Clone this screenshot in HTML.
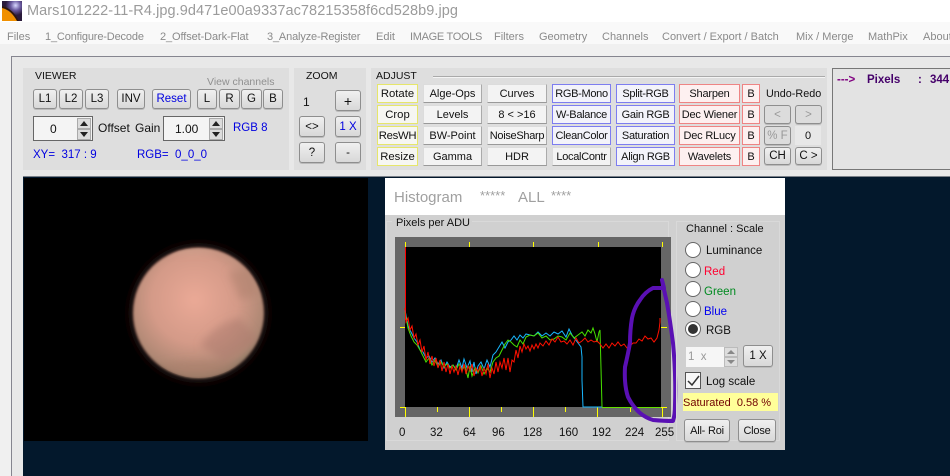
<!DOCTYPE html>
<html><head><meta charset="utf-8"><style>
*{box-sizing:border-box}
html,body{margin:0;padding:0}
body{width:950px;height:476px;overflow:hidden;position:relative;background:#f0f0f0;font-family:"Liberation Sans",Arial,sans-serif;font-size:12px;color:#111}
.a{position:absolute}
.t{position:absolute;white-space:nowrap;line-height:14px}
.h{font-size:10.5px}
.m{position:absolute;top:30px;color:#8a8a8a;font-size:11px;line-height:14px;white-space:nowrap}
.b{position:absolute;display:flex;align-items:center;justify-content:center;white-space:nowrap;border:1px solid #8e8e8e;border-radius:3px;background:linear-gradient(#f0f0f0,#d8d8d8);font-size:11.5px;color:#111;box-shadow:0 1px 0 #bbb}
.f{position:absolute;display:flex;align-items:center;justify-content:center;white-space:nowrap;height:19px;background:#f2f2f2;font-size:11px;color:#111}
.y{border:1px solid #e6e66a;background:#f6f6f2;font-size:11.3px}
.g{border:1px solid;border-color:#dcdcdc #aaa #999 #dcdcdc;background:#f3f3f3}
.u{border:1px solid #7d7df0;background:#f3f3fa;letter-spacing:-.3px}
.r{border:1px solid #ee8484;background:#fdf0f0;letter-spacing:-.2px}
.s{position:absolute;border:1px solid #666;background:#f4f4f4}
.ar{position:absolute;background:#dcdcdc;border:1px solid #aaa;width:14px;height:11px}
.ar:after{content:"";position:absolute;left:2px;border-left:4px solid transparent;border-right:4px solid transparent}
.up:after{top:2px;border-bottom:5px solid #222}
.dn:after{top:2px;border-top:5px solid #222}
.rd{position:absolute;left:685px;width:16px;height:16px;border-radius:50%;border:1px solid #666;background:#fff}
</style></head><body>

<div class="a" style="left:0;top:0;width:950px;height:22px;background:#fff"></div>
<div class="a" style="left:0;top:22px;width:950px;height:22px;background:#f9f9f9"></div>
<svg class="a" style="left:2px;top:1px" width="20" height="20" viewBox="0 0 20 20"><defs><radialGradient id="ic" cx="0.68" cy="0.22" r="0.5"><stop offset="0" stop-color="#d8d8ff"/><stop offset="0.5" stop-color="#6a5aa0"/><stop offset="1" stop-color="#2a1a3a"/></radialGradient></defs><rect width="20" height="20" fill="url(#ic)"/><path d="M0 7Q9 9 15 20H0Z" fill="#f09000"/><path d="M0 6Q10 8 16 20" stroke="#301808" stroke-width="1.5" fill="none"/></svg>
<div class="t" style="left:27px;top:3px;font-size:14.5px;line-height:17px;color:#9b9b9b;letter-spacing:.07px">Mars101222-11-R4.jpg.9d471e00a9337ac78215358f6cd528b9.jpg</div>
<div class="m" style="left:7px">Files</div>
<div class="m" style="left:45px;letter-spacing:-.15px">1_Configure-Decode</div>
<div class="m" style="left:160px;letter-spacing:-.1px">2_Offset-Dark-Flat</div>
<div class="m" style="left:267px;letter-spacing:-.15px">3_Analyze-Register</div>
<div class="m" style="left:376px">Edit</div>
<div class="m" style="left:410px;letter-spacing:-.3px">IMAGE TOOLS</div>
<div class="m" style="left:494px">Filters</div>
<div class="m" style="left:539px">Geometry</div>
<div class="m" style="left:602px">Channels</div>
<div class="m" style="left:662px">Convert / Export / Batch</div>
<div class="m" style="left:796px">Mix / Merge</div>
<div class="m" style="left:868px">MathPix</div>
<div class="m" style="left:923px">About</div>

<div class="a" style="left:11px;top:56px;width:939px;height:420px;background:#e8e8e8;border-left:1px solid #85858f;border-top:1px solid #85858f"></div>
<div class="a" style="left:23px;top:68px;width:266px;height:102px;background:#dedede"></div>
<div class="a" style="left:294px;top:68px;width:72px;height:102px;background:#dedede"></div>
<div class="a" style="left:371px;top:68px;width:456px;height:102px;background:#dedede"></div>
<div class="a" style="left:832px;top:68px;width:118px;height:102px;background:#e3e3e3;border:1px solid #777;border-right:0"></div>
<div class="t" style="left:837px;top:73px;font-weight:bold;color:#800080;font-size:11.5px">---&gt;</div>
<div class="t" style="left:867px;top:73px;font-weight:bold;color:#45006a;font-size:11.5px">Pixels</div>
<div class="t" style="left:918px;top:73px;font-weight:bold;color:#45006a;font-size:11.5px">:</div>
<div class="t" style="left:930px;top:73px;font-weight:bold;color:#45006a;font-size:11.5px">344</div>

<div class="t h" style="left:35px;top:69px">VIEWER</div>
<div class="t h" style="left:207px;top:75px;color:#909090">View channels</div>
<div class="b" style="left:33px;top:89px;width:24px;height:20px">L1</div>
<div class="b" style="left:59px;top:89px;width:24px;height:20px">L2</div>
<div class="b" style="left:85px;top:89px;width:24px;height:20px">L3</div>
<div class="b" style="left:117px;top:89px;width:28px;height:20px">INV</div>
<div class="b" style="left:152px;top:89px;width:39px;height:20px;color:#0000e0">Reset</div>
<div class="b" style="left:197px;top:89px;width:20px;height:20px">L</div>
<div class="b" style="left:219px;top:89px;width:21px;height:20px">R</div>
<div class="b" style="left:241px;top:89px;width:21px;height:20px">G</div>
<div class="b" style="left:263px;top:89px;width:20px;height:20px">B</div>
<div class="s" style="left:33px;top:116px;width:60px;height:25px"></div>
<div class="t" style="left:50px;top:122px">0</div>
<div class="ar up" style="left:77px;top:118px"></div><div class="ar dn" style="left:77px;top:129px"></div>
<div class="t" style="left:98px;top:121px">Offset</div>
<div class="t" style="left:135px;top:121px">Gain</div>
<div class="s" style="left:163px;top:116px;width:62px;height:25px"></div>
<div class="t" style="left:175px;top:122px">1.00</div>
<div class="ar up" style="left:209px;top:118px"></div><div class="ar dn" style="left:209px;top:129px"></div>
<div class="t" style="left:233px;top:121px;color:#0000e0;font-size:11.5px">RGB 8</div>
<div class="t" style="left:33px;top:148px;color:#0000e0;font-size:11.5px;white-space:pre">XY=  317 : 9</div>
<div class="t" style="left:137px;top:148px;color:#0000e0;font-size:11.5px;white-space:pre">RGB=  0_0_0</div>

<div class="t h" style="left:306px;top:69px">ZOOM</div>
<div class="t" style="left:303px;top:95px">1</div>
<div class="b" style="left:335px;top:90px;width:26px;height:21px;font-size:14px">+</div>
<div class="b" style="left:299px;top:116px;width:26px;height:21px">&lt;&gt;</div>
<div class="b" style="left:335px;top:116px;width:26px;height:21px;color:#0000e0">1 X</div>
<div class="b" style="left:299px;top:142px;width:26px;height:21px">?</div>
<div class="b" style="left:335px;top:142px;width:26px;height:21px">-</div>

<div class="t h" style="left:376px;top:69px">ADJUST</div>
<div class="a" style="left:433px;top:76px;width:392px;height:2px;background:#aaa;border-bottom:1px solid #f4f4f4"></div>

<div class="f y" style="left:377px;top:84px;width:41px">Rotate</div>
<div class="f y" style="left:377px;top:105px;width:41px">Crop</div>
<div class="f y" style="left:377px;top:126px;width:41px;letter-spacing:-.3px">ResWH</div>
<div class="f y" style="left:377px;top:147px;width:41px">Resize</div>
<div class="f g" style="left:423px;top:84px;width:59px">Alge-Ops</div>
<div class="f g" style="left:423px;top:105px;width:59px">Levels</div>
<div class="f g" style="left:423px;top:126px;width:59px">BW-Point</div>
<div class="f g" style="left:423px;top:147px;width:59px">Gamma</div>
<div class="f g" style="left:487px;top:84px;width:60px">Curves</div>
<div class="f g" style="left:487px;top:105px;width:60px">8 &lt; &gt;16</div>
<div class="f g" style="left:487px;top:126px;width:60px;letter-spacing:-.3px">NoiseSharp</div>
<div class="f g" style="left:487px;top:147px;width:60px">HDR</div>
<div class="f u" style="left:552px;top:84px;width:59px">RGB-Mono</div>
<div class="f u" style="left:552px;top:105px;width:59px">W-Balance</div>
<div class="f u" style="left:552px;top:126px;width:59px">CleanColor</div>
<div class="f g" style="left:552px;top:147px;width:59px;letter-spacing:-.3px">LocalContr</div>
<div class="f u" style="left:616px;top:84px;width:59px">Split-RGB</div>
<div class="f u" style="left:616px;top:105px;width:59px">Gain RGB</div>
<div class="f u" style="left:616px;top:126px;width:59px">Saturation</div>
<div class="f u" style="left:616px;top:147px;width:59px">Align RGB</div>
<div class="f r" style="left:679px;top:84px;width:61px">Sharpen</div>
<div class="f r" style="left:679px;top:105px;width:61px">Dec Wiener</div>
<div class="f r" style="left:679px;top:126px;width:61px">Dec RLucy</div>
<div class="f r" style="left:679px;top:147px;width:61px">Wavelets</div>
<div class="f r" style="left:742px;top:84px;width:18px">B</div>
<div class="f r" style="left:742px;top:105px;width:18px">B</div>
<div class="f r" style="left:742px;top:126px;width:18px">B</div>
<div class="f r" style="left:742px;top:147px;width:18px">B</div>
<div class="t" style="left:766px;top:87px;font-size:10.8px">Undo-Redo</div>
<div class="b" style="left:764px;top:105px;width:27px;height:19px;color:#999;background:#dcdcdc">&lt;</div>
<div class="b" style="left:795px;top:105px;width:27px;height:19px;color:#999;background:#dcdcdc">&gt;</div>
<div class="b" style="left:764px;top:126px;width:27px;height:19px;color:#999;background:#dcdcdc">% F</div>
<div class="f" style="left:795px;top:126px;width:26px;background:#e8e8e8">0</div>
<div class="b" style="left:764px;top:147px;width:27px;height:18px">CH</div>
<div class="b" style="left:795px;top:147px;width:27px;height:18px">C &gt;</div>

<div class="a" style="left:23px;top:176px;width:927px;height:300px;background:#03182c;border-top:1px solid #7a8088"></div>
<svg class="a" style="left:24px;top:178px" width="344" height="263" viewBox="24 178 344 263">
<defs>
<radialGradient id="mg" cx="0.47" cy="0.4" r="0.6"><stop offset="0" stop-color="#eaa996"/><stop offset="0.55" stop-color="#d49a88"/><stop offset="0.9" stop-color="#ad8773"/><stop offset="1" stop-color="#8f7a66"/></radialGradient>
<filter id="bl"><feGaussianBlur stdDeviation="1.3"/></filter>
<filter id="bl2"><feGaussianBlur stdDeviation="4"/></filter>
<clipPath id="mc"><circle cx="198.5" cy="313" r="65"/></clipPath>
</defs>
<rect x="24" y="178" width="344" height="263" fill="#000"/>
<circle cx="198.5" cy="313" r="70" fill="#1a0e0a" filter="url(#bl2)"/>
<circle cx="198.5" cy="313" r="65.5" fill="url(#mg)" filter="url(#bl)"/>
<g clip-path="url(#mc)" filter="url(#bl2)">
<path d="M200 345Q218 322 240 318L258 340 225 362Z" fill="#ad7c6e" opacity=".55"/>
<path d="M228 272l22-3 8 26-18 5Z" fill="#b0826f" opacity=".55"/>
<ellipse cx="198" cy="375" rx="55" ry="14" fill="#a87c6a" opacity=".5"/>
<path d="M140 256Q198 240 255 262L250 252H150Z" fill="#d5b09a" opacity=".7"/>
</g>
</svg>

<div class="a" style="left:385px;top:178px;width:400px;height:272px;background:#d0d0d0"></div>
<div class="a" style="left:385px;top:178px;width:400px;height:37px;background:#fff"></div>
<div class="t" style="left:394px;top:189px;font-size:15px;line-height:17px;color:#a0a0a0">Histogram</div>
<div class="t" style="left:480px;top:187px;font-size:13px;line-height:17px;color:#a0a0a0">*****</div>
<div class="t" style="left:518px;top:189px;font-size:15px;line-height:17px;color:#a0a0a0">ALL</div>
<div class="t" style="left:551px;top:187px;font-size:13px;line-height:17px;color:#a0a0a0">****</div>
<div class="a" style="left:386px;top:221px;width:283px;height:220px;border:1px solid #d9d9d9"></div>
<div class="a" style="left:392px;top:216px;width:80px;height:12px;background:#d0d0d0"></div>
<div class="t" style="left:396px;top:216px;font-size:11px">Pixels per ADU</div>
<div class="a" style="left:395px;top:237px;width:276px;height:180px;background:#666"></div>
<div class="a" style="left:405px;top:247px;width:256px;height:160px;background:#000"></div>
<svg class="a" style="left:385px;top:178px" width="400" height="272" viewBox="385 178 400 272" fill="none">
<g stroke="#ffff00" stroke-width="1">
<path d="M405.500 242V247M469.500 242V247M533.500 242V247M598.500 242V247M662.500 242V247"/>
<path d="M405.500 407V417M437.500 407V412M469.500 407V417M501.500 407V412M533.500 407V417M565.500 407V412M597.500 407V417M630.500 407V412M662.500 407V417"/>
<path d="M400 327.500H405M400 407.500H405M661 327.500H667M661 407.500H667"/>
</g>
<path d="M602 407.500H661" stroke="#66e000"/>
<path d="M405.500 247V320" stroke="#f00"/>
<polyline stroke="#19b8ff" points="405,310 408,326 411,332 414,338 417,342 420,350 423,352 426,358 429,356 432,362 435,358 438,364 441,360 444,368 447,362 450,367 453,365 456,369 459,360 462,368 464,359 467,368 470,361 472,372 474,362 476,374 478,366 481,362 484,369 487,360 490,367 493,355 496,352 499,347 502,342 505,348 508,342 511,340 514,336 517,340 520,335 523,338 526,334 530,335 534,336 538,332 542,336 546,333 550,336 554,332 558,334 562,331 566,337 569,329 572,335 575,339 578,343 581,347 582,357 582,380 583,407 602,407" />
<polyline stroke="#47e000" points="405,312 408,328 411,336 414,342 417,345 420,350 423,356 426,362 429,358 432,365 435,360 438,367 441,362 444,367 447,364 450,368 453,365 456,370 459,364 462,370 465,366 468,378 470,366 472,376 475,368 478,373 481,366 484,374 487,368 490,372 493,362 496,358 499,356 502,350 505,344 508,340 511,342 514,345 517,347 520,340 523,344 526,337 530,335 534,336 538,333 542,338 546,336 550,340 554,339 558,336 562,337 566,340 570,333 574,338 578,335 582,332 585,336 588,330 591,333 593,328 595,334 597,342 599,332 600,330 601,368 602,407" />
<polyline stroke="#ff1000" points="405,308 406,322 408,318 410,330 412,326 414,338 416,334 418,345 420,340 422,352 424,346 426,360 428,352 430,364 432,356 434,366 436,358 438,368 440,360 442,371 444,362 446,372 448,364 450,374 452,366 454,372 456,366 458,375 460,366 462,372 464,364 466,374 468,366 470,371 472,364 474,376 476,368 478,372 480,366 482,376 484,368 486,374 488,364 490,378 492,368 494,374 496,362 498,372 500,362 502,368 504,358 506,370 508,358 510,372 512,360 514,362 516,350 518,358 520,346 522,352 524,344 526,349 528,346 530,351 532,345 534,349 536,344 538,348 540,343 543,346 546,341 549,345 552,339 555,342 558,337 561,342 564,341 567,344 570,340 573,345 576,338 579,343 582,341 585,338 588,342 591,340 594,342 597,341 600,344 603,348 606,344 609,348 612,343 615,346 618,342 621,346 624,344 627,348 630,346 633,343 636,343 639,339 642,341 645,336 648,339 651,338 654,342 657,338 659,330 660,322 660,318" />
<path d="M662 280L664 288 653 288Q645 292 640 300 634 308 632 318 630 330 630 343 628 354 625 367 624 385 628 397 633 407 640 413 646 418 653 420 664 421 673 421 675 415 675 405 676 375 673 343 670 320 667 303 664 290 662 280Z" stroke="#5a10b4" stroke-width="4" stroke-linejoin="round" stroke-linecap="round"/>
</svg>
<div class="t" style="left:399px;top:426px;font-size:11.5px">0</div>
<div class="t" style="left:430px;top:426px;font-size:11.5px">32</div>
<div class="t" style="left:463px;top:426px;font-size:11.5px">64</div>
<div class="t" style="left:492px;top:426px;font-size:11.5px">96</div>
<div class="t" style="left:523px;top:426px;font-size:11.5px">128</div>
<div class="t" style="left:559px;top:426px;font-size:11.5px">160</div>
<div class="t" style="left:592px;top:426px;font-size:11.5px">192</div>
<div class="t" style="left:625px;top:426px;font-size:11.5px">224</div>
<div class="t" style="left:655px;top:426px;font-size:11.5px">255</div>

<div class="a" style="left:676px;top:221px;width:104px;height:220px;border:1px solid #d9d9d9"></div>
<div class="t" style="left:682px;top:222px;padding:0 4px;background:#d0d0d0;font-size:11px">Channel :  Scale</div>
<div class="rd" style="top:242px"></div><div class="t" style="left:706px;top:244px;font-size:11.5px">Luminance</div>
<div class="rd" style="top:262px"></div><div class="t" style="left:704px;top:265px;font-size:11.5px;color:#ff0030">Red</div>
<div class="rd" style="top:281px"></div><div class="t" style="left:704px;top:285px;font-size:11.5px;color:#008a20">Green</div>
<div class="rd" style="top:301px"></div><div class="t" style="left:704px;top:305px;font-size:11.5px;color:#0000f0">Blue</div>
<div class="rd" style="top:321px"></div><div class="a" style="left:688px;top:324px;width:10px;height:10px;border-radius:50%;background:#333"></div><div class="t" style="left:706px;top:324px;font-size:11.5px">RGB</div>
<div class="a" style="left:686px;top:347px;width:52px;height:20px;background:#f6f6f6"></div>
<div class="t" style="left:688px;top:350px;color:#999;font-size:11.5px;white-space:pre">1  x</div>
<div class="ar" style="left:724px;top:347px;height:10px;background:#ddd;border-color:#bbb"></div><div class="ar" style="left:724px;top:357px;height:10px;background:#ddd;border-color:#bbb"></div>
<svg class="a" style="left:724px;top:347px" width="14" height="20"><path d="M3 7L7 3 11 7ZM3 13H11L7 17Z" fill="#888"/></svg>
<div class="b" style="left:743px;top:345px;width:30px;height:22px">1 X</div>
<div class="a" style="left:685px;top:372px;width:16px;height:17px;background:#f8f8f8;border:1px solid #555"></div>
<svg class="a" style="left:686px;top:373px" width="15" height="15"><path d="M2 8L6 12 13 3" stroke="#333" stroke-width="1.500" fill="none"/></svg>
<div class="t" style="left:706px;top:375px;font-size:11.5px">Log scale</div>
<div class="a" style="left:683px;top:393px;width:95px;height:18px;background:#ffff99"></div>
<div class="t" style="left:683px;top:396px;font-size:11px;color:#700000;white-space:pre">Saturated  0.58 %</div>
<div class="b" style="left:684px;top:419px;width:46px;height:23px;font-size:11px;letter-spacing:-.2px">All- Roi</div>
<div class="b" style="left:738px;top:419px;width:38px;height:23px;font-size:11px;letter-spacing:-.2px">Close</div>

</body></html>
